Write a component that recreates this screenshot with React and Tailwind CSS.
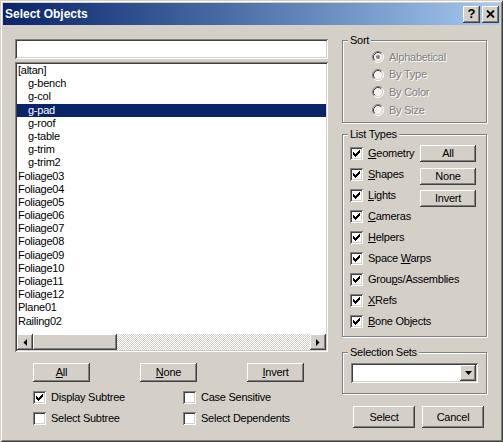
import React from 'react';

const raised =
  'bg-[#d4d0c8] shadow-[inset_-1px_-1px_0_#404040,inset_1px_1px_0_#fff,inset_-2px_-2px_0_#808080,inset_2px_2px_0_#d4d0c8]';
const sunken =
  'bg-white shadow-[inset_1px_1px_0_#808080,inset_-1px_-1px_0_#fff,inset_2px_2px_0_#404040,inset_-2px_-2px_0_#d4d0c8]';
const groupBox =
  'border border-[#808080] shadow-[inset_1px_1px_0_#fff,1px_1px_0_#fff] min-w-0';

const listItems = [
  ['[altan]', 0],
  ['g-bench', 1],
  ['g-col', 1],
  ['g-pad', 1, true],
  ['g-roof', 1],
  ['g-table', 1],
  ['g-trim', 1],
  ['g-trim2', 1],
  ['Foliage03', 0],
  ['Foliage04', 0],
  ['Foliage05', 0],
  ['Foliage06', 0],
  ['Foliage07', 0],
  ['Foliage08', 0],
  ['Foliage09', 0],
  ['Foliage10', 0],
  ['Foliage11', 0],
  ['Foliage12', 0],
  ['Plane01', 0],
  ['Railing02', 0],
];

function Button({ children, className = '' }) {
  return (
    <button type="button" className={`flex items-center justify-center text-black font-normal ${raised} ${className}`}>
      {children}
    </button>
  );
}

function CheckBox({ checked, children }) {
  return (
    <div className="flex items-center h-[21px] whitespace-nowrap">
      <span className="flex items-center justify-center w-[13px] h-[13px] shrink-0 bg-white shadow-[inset_1px_1px_0_#808080,inset_-1px_-1px_0_#fff,inset_2px_2px_0_#404040,inset_-2px_-2px_0_#d4d0c8]">
        {checked && (
          <svg width="7" height="7" viewBox="0 0 7 7">
            <path d="M0 2h1v1h1v1h1v-1h1v-1h1v-1h1v-1h1v3h-1v1h-1v1h-1v1h-1v1h-1v-1h-1v-1h-1z" fill="#000" />
          </svg>
        )}
      </span>
      <span className="ml-[5px]">{children}</span>
    </div>
  );
}

function Radio({ checked, children }) {
  return (
    <div className="flex items-center h-[17.8px] whitespace-nowrap">
      <svg width="12" height="12" viewBox="0 0 12 12" className="shrink-0">
        <circle cx="6" cy="6" r="5" fill="#f4f3ef" />
        <path d="M2.11 9.89A5.5 5.5 0 0 1 9.89 2.11" stroke="#808080" fill="none" />
        <path d="M9.89 2.11A5.5 5.5 0 0 1 2.11 9.89" stroke="#fff" fill="none" />
        <path d="M2.82 9.18A4.5 4.5 0 0 1 9.18 2.82" stroke="#404040" fill="none" />
        <path d="M9.18 2.82A4.5 4.5 0 0 1 2.82 9.18" stroke="#d4d0c8" fill="none" />
        {checked && <circle cx="6" cy="6" r="2" fill="#808080" />}
      </svg>
      <span className="ml-[5px] text-[#808080] [text-shadow:1px_1px_0_#fff]">{children}</span>
    </div>
  );
}

function Legend({ children }) {
  return <legend className="ml-[5px] px-[2px] leading-[13px] bg-[#d4d0c8]">{children}</legend>;
}

export default function App() {
  return (
    <div className="w-[503px] h-[442px] p-[3px] bg-[#d4d0c8] shadow-[inset_1px_1px_0_#d4d0c8,inset_-1px_-1px_0_#404040,inset_2px_2px_0_#fff,inset_-2px_-2px_0_#808080] font-['Liberation_Sans',Arial,sans-serif] text-[11px] tracking-[-0.25px] text-black overflow-hidden">
      {/* title bar */}
      <div className="flex items-center h-[22px] pl-[2px] pr-[1px] bg-gradient-to-r from-[#0a246a] to-[#a6caf0]">
        <span className="text-white font-bold text-[12px] tracking-normal">Select Objects</span>
        <div className="ml-auto flex gap-[2px]">
          <Button className="w-[17px] h-[17px] !font-bold text-[13px] leading-none tracking-normal">
            <span className="-mt-[1px]">?</span>
          </Button>
          <Button className="w-[17px] h-[17px]">
            <svg width="9" height="8" viewBox="0 0 9 8">
              <path d="M1 0.5L8 7.5M8 0.5L1 7.5" stroke="#000" strokeWidth="1.8" />
            </svg>
          </Button>
        </div>
      </div>

      <div className="flex px-[12px]">
        {/* left column */}
        <div className="w-[313px] pt-[14px] flex flex-col">
          <input className={`h-[20px] w-full px-[3px] outline-none ${sunken}`} />
          <div className={`mt-[3px] h-[290px] p-[2px] flex flex-col ${sunken}`}>
            <div className="flex-1 overflow-hidden">
              {listItems.map(([name, level, selected]) => (
                <div
                  key={name}
                  className={`h-[13.2px] leading-[13.2px] whitespace-nowrap ${level ? 'pl-[11px]' : 'pl-[1px]'} ${
                    selected ? 'bg-[#0a246a] text-white' : ''
                  }`}
                >
                  {name}
                </div>
              ))}
            </div>
            <div className="h-[16px] flex bg-[repeating-conic-gradient(#fff_0_25%,#d4d0c8_0_50%)] bg-[length:2px_2px]">
              <Button className="w-[16px] h-[16px] shrink-0">
                <svg width="4" height="7" viewBox="0 0 4 7">
                  <path d="M4 0L0.5 3.5L4 7z" fill="#000" />
                </svg>
              </Button>
              <div className={`w-[84px] h-[16px] ${raised}`} />
              <Button className="w-[16px] h-[16px] shrink-0 ml-auto">
                <svg width="4" height="7" viewBox="0 0 4 7">
                  <path d="M0 0L3.5 3.5L0 7z" fill="#000" />
                </svg>
              </Button>
            </div>
          </div>

          <div className="mt-[11px] flex pl-[18px] gap-[50px]">
            <Button className="w-[57px] h-[19px]">
              <span><u className="underline-offset-[1px]">A</u>ll</span>
            </Button>
            <Button className="w-[57px] h-[19px]">
              <span><u className="underline-offset-[1px]">N</u>one</span>
            </Button>
            <Button className="w-[57px] h-[19px]">
              <span><u className="underline-offset-[1px]">I</u>nvert</span>
            </Button>
          </div>

          <div className="mt-[5px] pl-[18px] grid grid-cols-[150px_auto]">
            <CheckBox checked>Display Subtree</CheckBox>
            <CheckBox>Case Sensitive</CheckBox>
            <CheckBox>Select Subtree</CheckBox>
            <CheckBox>Select Dependents</CheckBox>
          </div>
        </div>

        {/* right column */}
        <div className="ml-[14px] w-[145px] pt-[9px] flex flex-col">
          <fieldset className={`${groupBox} pb-[3px]`}>
            <Legend>Sort</Legend>
            <div className="mt-[1px] pl-[29px]">
              <Radio checked>Alphabetical</Radio>
              <Radio>By Type</Radio>
              <Radio>By Color</Radio>
              <Radio>By Size</Radio>
            </div>
          </fieldset>

          <fieldset className={`${groupBox} mt-[5px] pb-[4px]`}>
            <Legend>List Types</Legend>
            <div className="flex pl-[7px] mt-[2px]">
              <div className="w-[70px]">
                <CheckBox checked><u className="underline-offset-[1px]">G</u>eometry</CheckBox>
                <CheckBox checked><u className="underline-offset-[1px]">S</u>hapes</CheckBox>
                <CheckBox checked><u className="underline-offset-[1px]">L</u>ights</CheckBox>
                <CheckBox checked><u className="underline-offset-[1px]">C</u>ameras</CheckBox>
                <CheckBox checked><u className="underline-offset-[1px]">H</u>elpers</CheckBox>
                <CheckBox checked>Space <u className="underline-offset-[1px]">W</u>arps</CheckBox>
                <CheckBox checked>Grou<u className="underline-offset-[1px]">p</u>s/Assemblies</CheckBox>
                <CheckBox checked><u className="underline-offset-[1px]">X</u>Refs</CheckBox>
                <CheckBox checked><u className="underline-offset-[1px]">B</u>one Objects</CheckBox>
              </div>
              <div className="flex flex-col gap-[5.5px] mt-[2px]">
                <Button className="w-[56px] h-[17px]">All</Button>
                <Button className="w-[56px] h-[17px]">None</Button>
                <Button className="w-[56px] h-[17px]">Invert</Button>
              </div>
            </div>
          </fieldset>

          <fieldset className={`${groupBox} mt-[9px] pb-[10px]`}>
            <Legend>Selection Sets</Legend>
            <div className="px-[8px] mt-[4px]">
              <div className={`h-[20px] p-[2px] flex justify-end ${sunken}`}>
                <Button className="w-[16px] h-[16px]">
                  <svg width="7" height="4" viewBox="0 0 7 4">
                    <path d="M0 0H7L3.5 4z" fill="#000" />
                  </svg>
                </Button>
              </div>
            </div>
          </fieldset>

          <div className="mt-[12px] pl-[11px] flex gap-[7px]">
            <Button className="w-[62px] h-[22px]">Select</Button>
            <Button className="w-[62px] h-[22px]">Cancel</Button>
          </div>
        </div>
      </div>
    </div>
  );
}
